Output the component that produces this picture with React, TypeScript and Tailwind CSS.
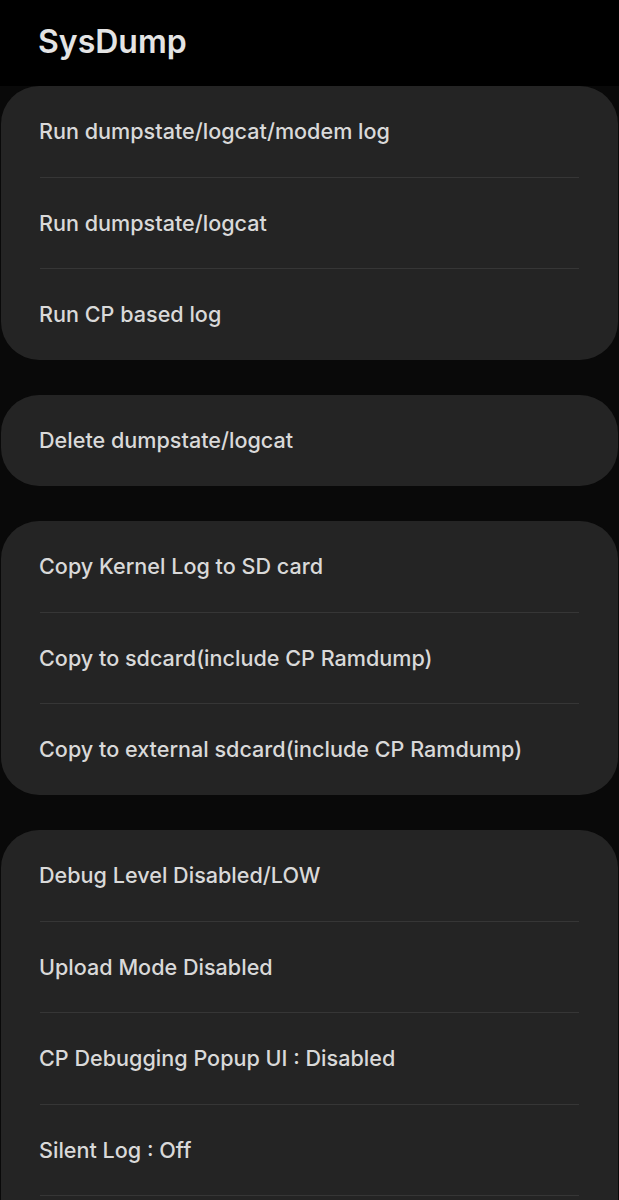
const groups: string[][] = [
  ['Run dumpstate/logcat/modem log', 'Run dumpstate/logcat', 'Run CP based log'],
  ['Delete dumpstate/logcat'],
  [
    'Copy Kernel Log to SD card',
    'Copy to sdcard(include CP Ramdump)',
    'Copy to external sdcard(include CP Ramdump)',
  ],
  [
    'Debug Level Disabled/LOW',
    'Upload Mode Disabled',
    'CP Debugging Popup UI : Disabled',
    'Silent Log : Off',
    '',
  ],
]

export default function App() {
  return (
    <div
      className="h-[1200px] overflow-hidden bg-[#090909]"
      style={{ fontFamily: 'Inter, Roboto, "Noto Sans", sans-serif' }}
    >
      {/* Title bar */}
      <header className="h-[86px] bg-black flex items-center px-[38px] pb-[2px]">
        <h1 className="text-[32px] font-semibold text-[#e4e4e4]">SysDump</h1>
      </header>

      <div className="flex flex-col gap-[35.5px]">
        {groups.map((items, gi) => (
          <section key={gi} className="bg-[#242424] rounded-[38px] mx-[1px]">
            {items.map((label, i) => (
              <div key={i}>
                {i > 0 && <div className="mx-[39px] h-px bg-[#363636]" />}
                <div className="h-[90.5px] flex items-center px-[38px]">
                  <span className="text-[21.6px] font-medium text-[#d9d9d9]">{label}</span>
                </div>
              </div>
            ))}
          </section>
        ))}
      </div>
    </div>
  )
}
